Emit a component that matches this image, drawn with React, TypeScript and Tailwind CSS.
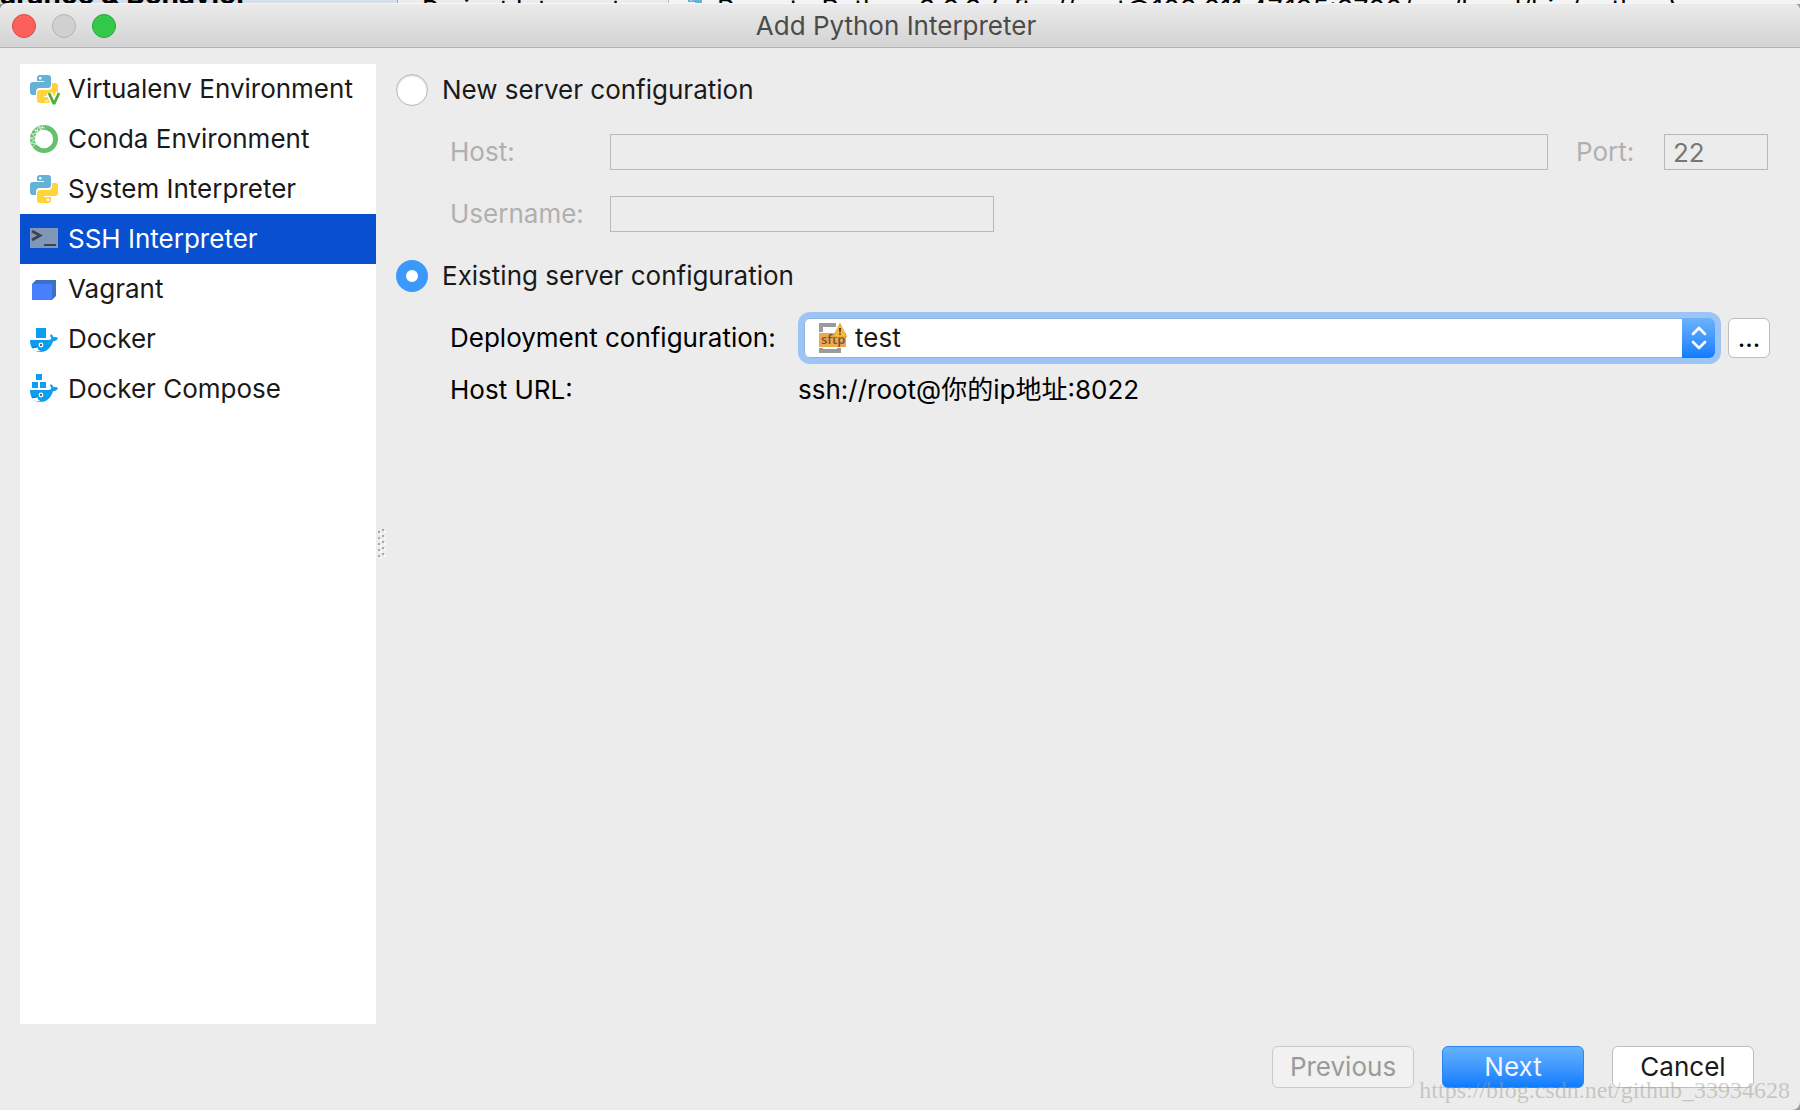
import { useState, type ReactNode } from "react";

function PythonShape() {
  return (
    <>
      <path
        d="M7 3Q7 0 10 0H18Q21 0 21 3V10Q21 13 18 13H10Q6 13 6 17V20H3Q0 20 0 17V10Q0 7 3 7H14V6H7Z"
        fill="#65b1d8"
      />
      <path
        d="M21 25Q21 28 18 28H10Q7 28 7 25V18Q7 15 10 15H18Q22 15 22 11V8H25Q28 8 28 11V18Q28 21 25 21H14V22H21Z"
        fill="#ffd43b"
      />
      <rect x="9" y="2" width="2.4" height="2.4" rx="0.6" fill="#fff" />
    </>
  );
}

function PythonIcon() {
  return (
    <svg viewBox="0 0 28 28" className="size-7 overflow-visible" aria-hidden="true">
      <PythonShape />
      <rect x="16.8" y="23.6" width="2.4" height="2.4" rx="0.6" fill="#fff" />
    </svg>
  );
}

function VirtualenvIcon() {
  return (
    <svg viewBox="0 0 28 28" className="size-7 overflow-visible" aria-hidden="true">
      <PythonShape />
      <path d="M14 21.5h4M15 26h3" stroke="#fff" strokeWidth="1" />
      <path d="M19 18l5 11 5-11" fill="none" stroke="#fff" strokeWidth="6" />
      <path d="M19 18l5 11 5-11" fill="none" stroke="#4fae37" strokeWidth="2.8" strokeLinejoin="bevel" />
    </svg>
  );
}

function CondaIcon() {
  return (
    <svg viewBox="0 0 28 28" className="size-7" aria-hidden="true">
      <circle cx="14" cy="14" r="11.6" fill="none" stroke="#67c06f" strokeWidth="4.8" />
      <g stroke="#fff" strokeWidth="0.7" fill="none">
        <path d="M13 0l-2 6M15 3l-6 -1M9 1l2 5M8 2l-1 6M4 5l6 1M5 4l2 6M2 9l6 -1M1 8l5 5M0 14l6 -3M0 12l5 4M5 15l-5 3M1 18l6 1M6 19l-4 3" />
      </g>
    </svg>
  );
}

function TerminalIcon() {
  return (
    <svg viewBox="0 0 28 28" className="size-7" aria-hidden="true">
      <rect y="3" width="28" height="20" fill="#8097ba" />
      <path d="M2 6l8 4.5L2 15" fill="none" stroke="#3f434c" strokeWidth="2.8" />
      <rect x="14" y="19" width="12" height="2" fill="#3f434c" />
    </svg>
  );
}

function VagrantIcon() {
  return (
    <svg viewBox="0 0 28 28" className="size-7" aria-hidden="true">
      <path d="M2 9l4-4h20v16l-4 4z" fill="#3f6fc4" />
      <rect x="2" y="9" width="20" height="16" fill="#4680ff" />
    </svg>
  );
}

function Whale() {
  return (
    <>
      <path
        d="M0 15H18.5Q21 15 21.5 13.2Q19.4 11.4 20.6 9Q23 10 23.4 12.2Q26 11.8 28 13Q27 16 23 16.2C21 22 17.5 27 10 27C3 27 0 22 0 15Z"
        fill="#0a9df2"
      />
      <path d="M1.5 23.2Q5 23.6 7.6 22.2Q7.6 25 11 26.2Q4.5 27 1.5 23.2Z" fill="#fff" />
      <path d="M2 22.5Q5 22.6 7 21.4" fill="none" stroke="#156a9e" strokeWidth="0.7" />
      <circle cx="11" cy="20" r="2.4" fill="#fff" />
      <circle cx="11" cy="20" r="1" fill="#1b3b52" />
    </>
  );
}

function DockerIcon() {
  return (
    <svg viewBox="0 0 28 28" className="size-7" aria-hidden="true">
      <rect x="6" y="3" width="10" height="10" fill="#0a9df2" />
      <Whale />
    </svg>
  );
}

function ComposeIcon() {
  return (
    <svg viewBox="0 0 28 28" className="size-7 overflow-visible" aria-hidden="true">
      <path d="M6 -1h6v6H6zM2 7h6v6H2zM10 7h6v6h-6z" fill="#0a9df2" />
      <Whale />
    </svg>
  );
}

function SftpIcon() {
  return (
    <svg viewBox="0 0 28 30" className="h-[30px] w-7" aria-hidden="true">
      <path d="M0 0H17V4H4V9H0ZM0 25H4V26H18V25H22V30H0Z" fill="#9b9b9b" />
      <rect y="10" width="27" height="14" fill="#f0a84c" />
      <text x="2" y="21" fontSize="13" fontWeight="600" fontFamily="Open Sans, sans-serif" fill="#6b5540">
        sftp
      </text>
      <path d="M21 0.5L28 14H14Z" fill="#f5bd3d" stroke="#e0a02e" strokeWidth="0.8" />
      <path d="M20 5h2l-0.4 4.5h-1.2zM20.200 10.500h1.600v1.600h-1.600z" fill="#4a3a1a" />
    </svg>
  );
}

function SplitterGrip() {
  return (
    <svg viewBox="0 0 10 32" className="h-8 w-2.5" aria-hidden="true">
      <path d="M2 3h2v2H2zM2 9h2v2H2zM2 15h2v2H2zM2 21h2v2H2zM2 27h2v2H2z" fill="#a8a8a8" />
      <path d="M6 1h2v2H6zM6 7h2v2H6zM6 13h2v2H6zM6 19h2v2H6zM6 25h2v2H6z" fill="#a8a8a8" />
      <path
        d="M4 5h2v2H4zM4 11h2v2H4zM4 17h2v2H4zM4 23h2v2H4zM4 29h2v2H4zM8 3h2v2H8zM8 9h2v2H8zM8 15h2v2H8zM8 21h2v2H8zM8 27h2v2H8z"
        fill="#fafafa"
      />
    </svg>
  );
}

const environments: { name: string; icon: ReactNode }[] = [
  { name: "Virtualenv Environment", icon: <VirtualenvIcon /> },
  { name: "Conda Environment", icon: <CondaIcon /> },
  { name: "System Interpreter", icon: <PythonIcon /> },
  { name: "SSH Interpreter", icon: <TerminalIcon /> },
  { name: "Vagrant", icon: <VagrantIcon /> },
  { name: "Docker", icon: <DockerIcon /> },
  { name: "Docker Compose", icon: <ComposeIcon /> },
];

function BackgroundWindow() {
  return (
    <div className="flex h-1 items-start overflow-hidden bg-[#ececec] text-black" aria-hidden="true">
      <div className="flex h-1 w-[398px] shrink-0 items-end overflow-hidden border-r border-[#a8a8a8] bg-[#d6dee8]">
        <span className="-mb-1.5 text-[28px] font-bold whitespace-nowrap">arance &amp; Behavior</span>
      </div>
      <span className="-mt-1.5 w-[270px] shrink-0 pl-6 whitespace-nowrap">Project Interpreter:</span>
      <div className="flex h-1 grow items-start gap-2 overflow-hidden border-l border-[#b5b5b5] bg-[#f4f4f4] pl-3">
        <span className="-mt-1 shrink-0">
          <PythonIcon />
        </span>
        <span className="-mt-1.5 text-[27px] whitespace-nowrap">
          Remote Python 3.6.3 (sftp://root@103.211.47.195:3700/usr/local/bin/python)
        </span>
      </div>
    </div>
  );
}

function TitleBar() {
  return (
    <header className="flex h-[45px] items-center border-t border-b border-t-[#f6f6f6] border-b-[#b1b1b1] bg-linear-to-b from-[#ebebeb] to-[#d3d3d3] pr-5 pl-3">
      <div className="flex flex-1 gap-4">
        <button aria-label="Close" className="size-6 rounded-full border border-[#e2443f] bg-[#fc605b]" />
        <button aria-label="Minimize" className="size-6 rounded-full border border-[#b4b4b4] bg-[#d0d0d0]" />
        <button aria-label="Zoom" className="size-6 rounded-full border border-[#24a635] bg-[#34c84a]" />
      </div>
      <h1 className="text-[#4b4b4b]">Add Python Interpreter</h1>
      <div className="flex-1" />
    </header>
  );
}

const radioClass =
  "size-8 shrink-0 appearance-none rounded-full border border-[#b8b8b8] bg-white shadow-[inset_0_1px_2px_#00000030] checked:border-[10px] checked:border-[#3b99fc] checked:shadow-none";
const fieldClass = "h-9 min-w-0 border border-[#b9b9b9] bg-transparent px-2 text-[#777777]";

export default function App() {
  const [selected, setSelected] = useState("SSH Interpreter");
  const [server, setServer] = useState("existing");

  return (
    <div className="flex min-h-screen flex-col bg-[#9a9a9a] font-['Inter','Noto_Sans_CJK_SC',sans-serif] text-[26px] leading-8 text-[#1a1a1a]">
      <BackgroundWindow />
      <div className="-mt-px flex grow flex-col">
        <div className="flex grow flex-col overflow-hidden rounded-t-lg rounded-br-lg bg-[#ececec]">
          <TitleBar />
          <main className="flex grow pt-4 pr-[30px] pl-5">
            <nav className="w-[356px] shrink-0 bg-white">
              <ul>
                {environments.map((env) => (
                  <li key={env.name}>
                    <button
                      onClick={() => setSelected(env.name)}
                      className={
                        "flex h-[50px] w-full items-center gap-2.5 pl-2.5 text-left whitespace-nowrap " +
                        (env.name === selected ? "bg-[#0850d0] text-white" : "")
                      }
                    >
                      {env.icon}
                      {env.name}
                    </button>
                  </li>
                ))}
              </ul>
            </nav>

            <div className="flex w-5 shrink-0 items-center">
              <SplitterGrip />
            </div>

            <form className="min-w-0 grow">
              <label className="flex h-[52px] items-center gap-3.5">
                <input
                  type="radio"
                  name="server"
                  checked={server === "new"}
                  onChange={() => setServer("new")}
                  className={radioClass}
                />
                New server configuration
              </label>
              <div className="mt-[18px] flex items-center pr-0.5 pl-[54px] text-[#b0b0b0]">
                <label htmlFor="host" className="w-40 shrink-0">
                  Host:
                </label>
                <input id="host" disabled className={fieldClass + " grow"} />
                <label htmlFor="port" className="ml-7 w-[88px] shrink-0">
                  Port:
                </label>
                <input id="port" disabled defaultValue="22" className={fieldClass + " w-[104px]"} />
              </div>
              <div className="mt-[26px] flex items-center pl-[54px] text-[#b0b0b0]">
                <label htmlFor="username" className="w-40 shrink-0">
                  Username:
                </label>
                <input id="username" disabled className={fieldClass + " w-96"} />
              </div>
              <label className="mt-7 flex h-8 items-center gap-3.5">
                <input
                  type="radio"
                  name="server"
                  checked={server === "existing"}
                  onChange={() => setServer("existing")}
                  className={radioClass}
                />
                Existing server configuration
              </label>
              <div className="mt-[26px] flex items-center pl-[54px] text-black">
                <label htmlFor="deployment" className="w-[354px] shrink-0 whitespace-nowrap">
                  Deployment configuration:
                </label>
                <div className="relative grow rounded-md ring-[6px] ring-[#9cc5f6]">
                  <select
                    id="deployment"
                    className="block h-10 w-full appearance-none rounded-md border border-[#8fb3e0] bg-white pl-[50px] text-[#1a1a1a] outline-none"
                  >
                    <option>test</option>
                  </select>
                  <span className="pointer-events-none absolute inset-y-0 left-[15px] flex items-center">
                    <SftpIcon />
                  </span>
                  <span className="pointer-events-none absolute inset-y-0 right-0 flex w-[33px] items-center justify-center rounded-r-md bg-linear-to-b from-[#6ab3fa] to-[#0a7cff]">
                    <svg viewBox="0 0 16 24" className="h-6 w-4" fill="none" stroke="#fff" strokeWidth="2.6" strokeLinecap="round" strokeLinejoin="round" aria-hidden="true">
                      <path d="M2 8l6-6 6 6M2 16l6 6 6-6" />
                    </svg>
                  </span>
                </div>
                <button
                  type="button"
                  className="ml-[13px] h-10 w-[42px] shrink-0 rounded-md border border-[#bdbdbd] bg-white"
                >
                  ...
                </button>
              </div>
              <div className="mt-4 flex items-center pl-[54px] text-black">
                <span className="w-[348px] shrink-0">Host URL:</span>
                <span>ssh://root@你的ip地址:8022</span>
              </div>
            </form>
          </main>

          <footer className="relative flex justify-end gap-7 py-[22px] pr-[46px]">
            <button disabled className="h-[42px] w-[142px] rounded-md border border-[#c9c9c9] bg-[#f1f1f1] text-[#9a9a9a]">
              Previous
            </button>
            <button className="h-[42px] w-[142px] rounded-md border border-[#2a84f5] bg-linear-to-b from-[#66b1fb] to-[#0a7cff] text-[#f4f4ff]">
              Next
            </button>
            <button className="h-[42px] w-[142px] rounded-md border border-[#bdbdbd] bg-white">Cancel</button>
            <span className="pointer-events-none absolute right-2.5 bottom-2 font-['Liberation_Serif',serif] text-2xl leading-6 text-[#a0a096]/50">
              https://blog.csdn.net/github_33934628
            </span>
          </footer>
        </div>
      </div>
    </div>
  );
}
